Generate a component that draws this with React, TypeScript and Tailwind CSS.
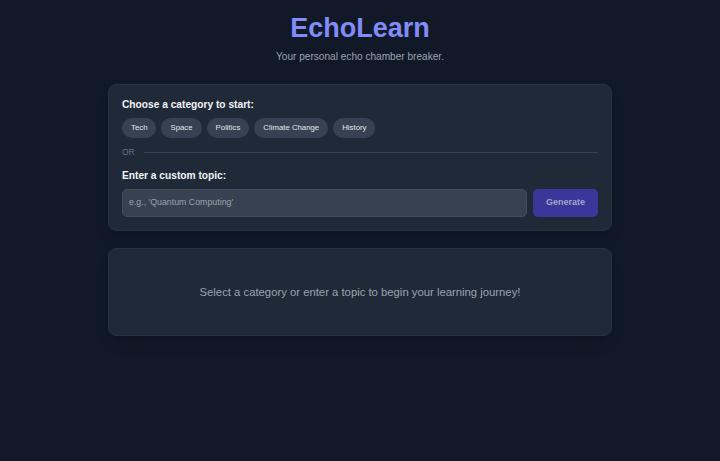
import React from "react";

export default function App() {
  const cats = ["Tech", "Space", "Politics", "Climate Change", "History"];
  return (
    <div className="min-h-[461px] w-full bg-[#111827] font-['Liberation_Sans',Arial,sans-serif]">
      <div className="mx-auto w-[504px] pt-[12px]">
        <h1 className="text-center text-[27px] font-bold leading-[32px] text-[#818cf8]">EchoLearn</h1>
        <p className="mt-[6px] text-center text-[10.1px] leading-[14px] text-[#9ca3af]">
          Your personal echo chamber breaker.
        </p>
        <div className="mt-[20px] rounded-[8px] border border-[#28313f] bg-[#1f2937] px-[13px] pt-[13px] pb-[13px] shadow-lg">
          <h2 className="text-[10.2px] font-bold leading-[14px] text-[#f3f4f6]">Choose a category to start:</h2>
          <div className="mt-[6px] flex gap-[5px]">
            {cats.map((c) => (
              <button
                key={c}
                className="h-[20px] rounded-full bg-[#374151] px-[9px] text-[7.8px] leading-[20px] text-[#e5e7eb]"
              >
                {c}
              </button>
            ))}
          </div>
          <div className="mt-[8px] flex items-center gap-[9px]">
            <span className="text-[8.5px] leading-[12px] text-[#6b7280]">OR</span>
            <div className="h-px flex-1 bg-[#374151]" />
          </div>
          <h2 className="mt-[11px] text-[10.2px] font-bold leading-[14px] text-[#f3f4f6]">Enter a custom topic:</h2>
          <div className="mt-[6px] flex gap-[6px]">
            <div className="flex h-[28px] flex-1 items-center rounded-[5px] border border-[#434d5c] bg-[#374151] px-[6px] text-[8.8px] text-[#9ca3af]">
              e.g., 'Quantum Computing'
            </div>
            <button className="h-[28px] w-[65px] rounded-[5px] bg-[#3a379b] text-[9px] font-semibold text-[#a3a6c7]">
              Generate
            </button>
          </div>
        </div>
        <div className="mt-[17px] flex h-[88px] items-center justify-center rounded-[8px] border border-[#28313f] bg-[#1f2937] shadow-lg">
          <p className="text-[11.3px] text-[#9ca3af]">
            Select a category or enter a topic to begin your learning journey!
          </p>
        </div>
      </div>
    </div>
  );
}
